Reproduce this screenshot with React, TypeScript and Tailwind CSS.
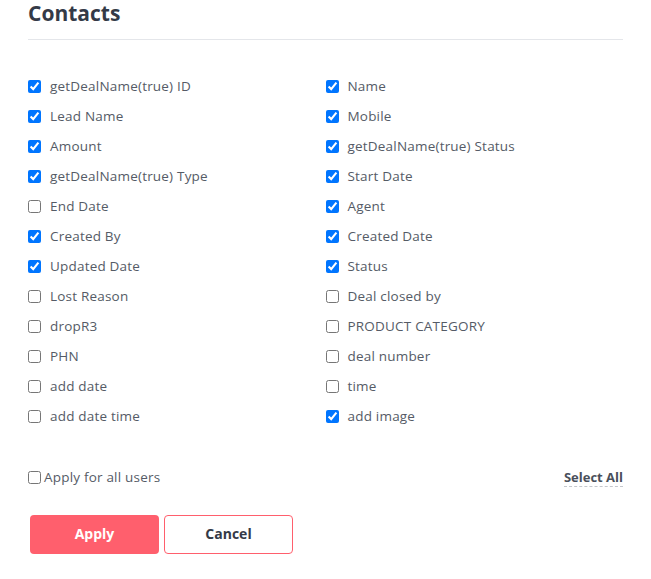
import { useState } from "react";

const FIELDS: [string, boolean][] = [
  ["getDealName(true) ID", true],
  ["Name", true],
  ["Lead Name", true],
  ["Mobile", true],
  ["Amount", true],
  ["getDealName(true) Status", true],
  ["getDealName(true) Type", true],
  ["Start Date", true],
  ["End Date", false],
  ["Agent", true],
  ["Created By", true],
  ["Created Date", true],
  ["Updated Date", true],
  ["Status", true],
  ["Lost Reason", false],
  ["Deal closed by", false],
  ["dropR3", false],
  ["PRODUCT CATEGORY", false],
  ["PHN", false],
  ["deal number", false],
  ["add date", false],
  ["time", false],
  ["add date time", false],
  ["add image", true],
];

export default function App() {
  const [checked, setChecked] = useState(FIELDS.map((f) => f[1]));
  const [allUsers, setAllUsers] = useState(false);

  return (
    <div className="bg-white w-[651px] h-[579px] px-[28px] font-['Open_Sans',sans-serif] text-[#555b66]">
      {/* HEADER */}
      <h2 className="text-[21px] leading-[26px] font-bold text-[#343a47]">Contacts</h2>
      <div className="border-b border-[#e4e6ea] mt-[13px] w-[595px]" />

      {/* FIELD LIST */}
      <div className="grid grid-cols-2 w-[595px] mt-[37px] gap-y-[12px]">
        {FIELDS.map(([label], idx) => (
          <label
            key={label}
            className="flex items-center h-[18px] text-[13.5px] tracking-[0.2px] cursor-pointer"
          >
            <input
              type="checkbox"
              className="m-0 w-[13px] h-[13px] mr-[9px]"
              checked={checked[idx]}
              onChange={() =>
                setChecked((prev) => prev.map((v, i) => (i === idx ? !v : v)))
              }
            />
            {label}
          </label>
        ))}
      </div>

      {/* FOOTER */}
      <div className="flex items-center justify-between w-[595px] mt-[42px]">
        <label className="flex items-center text-[13.5px] tracking-[0.2px] cursor-pointer">
          <input
            type="checkbox"
            className="m-0 w-[13px] h-[13px] mr-[3px]"
            checked={allUsers}
            onChange={() => setAllUsers(!allUsers)}
          />
          Apply for all users
        </label>
        <button className="text-[13px] font-bold text-[#4a505b] border-b border-dashed border-[#c4c7cc] leading-[18px]">
          Select All
        </button>
      </div>

      <div className="flex gap-[5px] mt-[28px] ml-[2px]">
        <button className="w-[129px] h-[39px] rounded-[4px] bg-[#ff5f6d] text-white text-[14px] font-bold leading-[18px] pb-[2px]">
          Apply
        </button>
        <button className="w-[129px] h-[39px] rounded-[4px] border border-[#ff5f6d] bg-white text-[#343a47] text-[14px] font-bold leading-[18px] pb-[2px]">
          Cancel
        </button>
      </div>
    </div>
  );
}
